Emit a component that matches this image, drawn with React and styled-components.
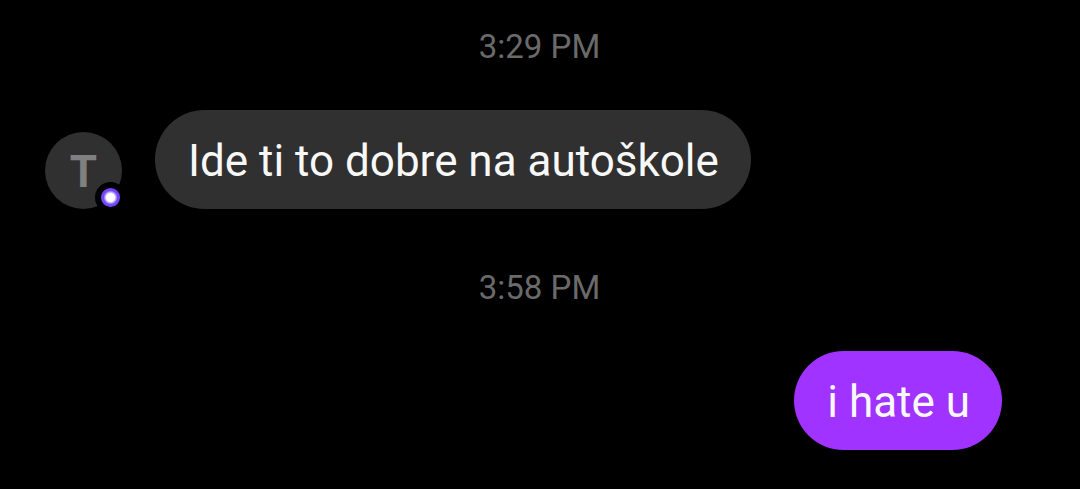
import React from "react";
import styled, { createGlobalStyle } from "styled-components";

const GlobalStyle = createGlobalStyle`
  body {
    margin: 0;
    background: #000;
    font-family: Roboto, sans-serif;
  }
`;

const Thread = styled.main`
  box-sizing: border-box;
  min-height: 100vh;
  padding: 27px 78px 39px 45px;
  display: flex;
  flex-direction: column;
`;

const Timestamp = styled.time`
  margin-right: -32px;
  text-align: center;
  font-size: 33px;
  line-height: 40px;
  color: #6a6a6a;
`;

const MessageRow = styled.div`
  display: flex;
  align-items: flex-end;
  justify-content: ${({ $own }) => ($own ? "flex-end" : "flex-start")};
  gap: 33px;
  margin: 43px 0 59px;

  &:last-child {
    margin-bottom: 0;
  }
`;

const Avatar = styled.div`
  position: relative;
  flex: none;
  width: 77px;
  height: 77px;
  border-radius: 50%;
  background: #303030;
  color: #808080;
  font-size: 44px;
  font-weight: 700;
  line-height: 80px;
  text-align: center;
`;

const StatusBadge = styled.span`
  position: absolute;
  right: -4px;
  bottom: -4px;
  box-sizing: border-box;
  width: 31px;
  height: 31px;
  border: 6px solid #000;
  border-radius: 50%;
  background: radial-gradient(circle, #fff 0 4px, #7646ff 7px);
`;

const Bubble = styled.p`
  margin: 0;
  padding: 27px 32px 24px 33px;
  border-radius: 50px;
  background: ${({ $own }) => ($own ? "#a033ff" : "#303030")};
  color: #f8f8f8;
  font-size: 44px;
  line-height: 48px;
`;

export default function App() {
  return (
    <>
      <GlobalStyle />
      <Thread>
        <Timestamp>3:29 PM</Timestamp>
        <MessageRow>
          <Avatar>
            T
            <StatusBadge />
          </Avatar>
          <Bubble>Ide ti to dobre na autoškole</Bubble>
        </MessageRow>
        <Timestamp>3:58 PM</Timestamp>
        <MessageRow $own>
          <Bubble $own>i hate u</Bubble>
        </MessageRow>
      </Thread>
    </>
  );
}
